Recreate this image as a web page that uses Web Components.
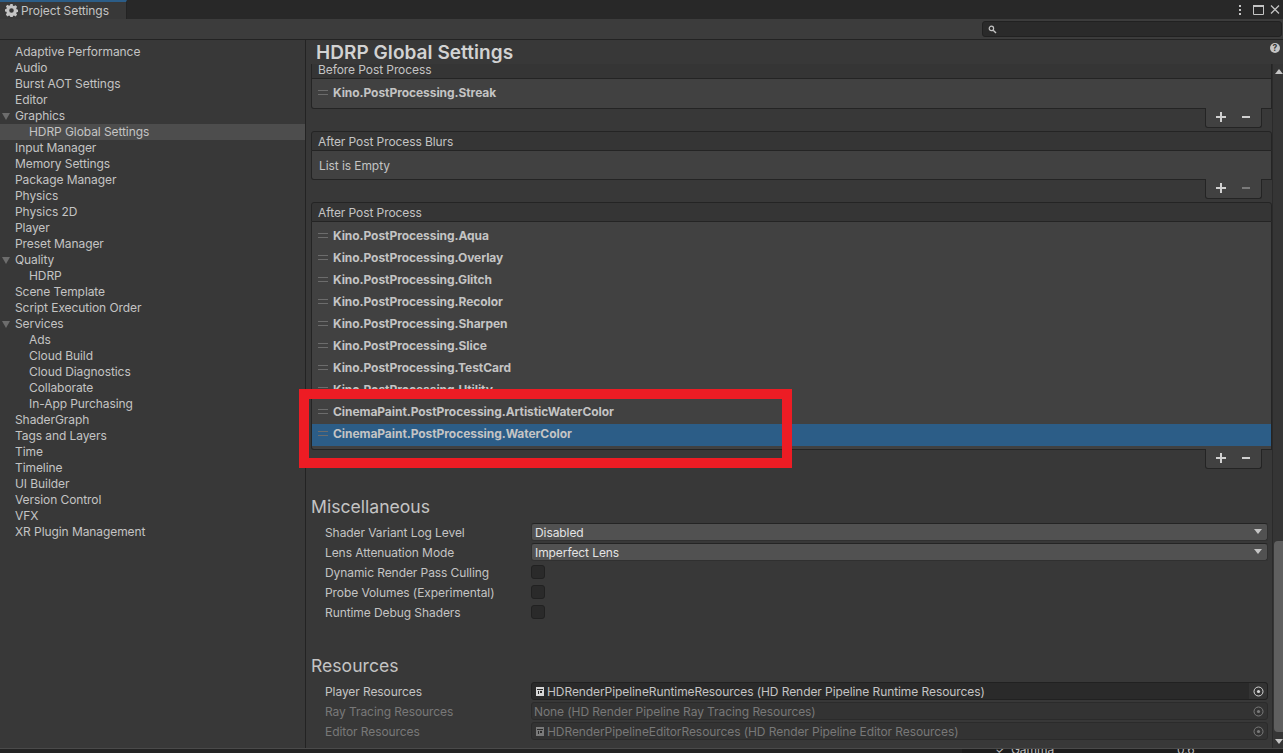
<!DOCTYPE html>
<html>
<head>
<meta charset="utf-8">
<title>Project Settings</title>
<style>
  html, body { margin: 0; height: 100%; overflow: hidden; background: #383838; }
  body { font: 12px Inter, "Liberation Sans", sans-serif; letter-spacing: -0.08px; color: #c4c4c4; }
</style>
</head>
<body>
<settings-window>
  <settings-sidebar slot="side">
    <tree-row>Adaptive Performance</tree-row>
    <tree-row>Audio</tree-row>
    <tree-row>Burst AOT Settings</tree-row>
    <tree-row>Editor</tree-row>
    <tree-row open>Graphics</tree-row>
    <tree-row child selected>HDRP Global Settings</tree-row>
    <tree-row>Input Manager</tree-row>
    <tree-row>Memory Settings</tree-row>
    <tree-row>Package Manager</tree-row>
    <tree-row>Physics</tree-row>
    <tree-row>Physics 2D</tree-row>
    <tree-row>Player</tree-row>
    <tree-row>Preset Manager</tree-row>
    <tree-row open>Quality</tree-row>
    <tree-row child>HDRP</tree-row>
    <tree-row>Scene Template</tree-row>
    <tree-row>Script Execution Order</tree-row>
    <tree-row open>Services</tree-row>
    <tree-row child>Ads</tree-row>
    <tree-row child>Cloud Build</tree-row>
    <tree-row child>Cloud Diagnostics</tree-row>
    <tree-row child>Collaborate</tree-row>
    <tree-row child>In-App Purchasing</tree-row>
    <tree-row>ShaderGraph</tree-row>
    <tree-row>Tags and Layers</tree-row>
    <tree-row>Time</tree-row>
    <tree-row>Timeline</tree-row>
    <tree-row>UI Builder</tree-row>
    <tree-row>Version Control</tree-row>
    <tree-row>VFX</tree-row>
    <tree-row>XR Plugin Management</tree-row>
  </settings-sidebar>

  <reorder-list title="Before Post Process" style="--head-h:15px;--body-h:30px;--pad:3px">
    <list-item>Kino.PostProcessing.Streak</list-item>
  </reorder-list>
  <reorder-list title="After Post Process Blurs" style="--top:3px;--body-h:29px" empty>
    <span class="empty">List is Empty</span>
  </reorder-list>
  <reorder-list title="After Post Process" style="--top:3px;--body-h:228px;--pad:4px;--item-pb:4px">
    <list-item>Kino.PostProcessing.Aqua</list-item>
    <list-item>Kino.PostProcessing.Overlay</list-item>
    <list-item>Kino.PostProcessing.Glitch</list-item>
    <list-item>Kino.PostProcessing.Recolor</list-item>
    <list-item>Kino.PostProcessing.Sharpen</list-item>
    <list-item>Kino.PostProcessing.Slice</list-item>
    <list-item>Kino.PostProcessing.TestCard</list-item>
    <list-item>Kino.PostProcessing.Utility</list-item>
    <list-item>CinemaPaint.PostProcessing.ArtisticWaterColor</list-item>
    <list-item selected>CinemaPaint.PostProcessing.WaterColor</list-item>
  </reorder-list>

  <section-head style="--gap:27px;--after:4px">Miscellaneous</section-head>
  <field-row label="Shader Variant Log Level"><popup-field>Disabled</popup-field></field-row>
  <field-row label="Lens Attenuation Mode"><popup-field>Imperfect Lens</popup-field></field-row>
  <field-row label="Dynamic Render Pass Culling"><check-box></check-box></field-row>
  <field-row label="Probe Volumes (Experimental)"><check-box></check-box></field-row>
  <field-row label="Runtime Debug Shaders"><check-box></check-box></field-row>

  <section-head style="--gap:33px;--after:4px">Resources</section-head>
  <field-row label="Player Resources"><object-field icon>HDRenderPipelineRuntimeResources (HD Render Pipeline Runtime Resources)</object-field></field-row>
  <field-row label="Ray Tracing Resources" disabled><object-field disabled>None (HD Render Pipeline Ray Tracing Resources)</object-field></field-row>
  <field-row label="Editor Resources" disabled><object-field icon disabled>HDRenderPipelineEditorResources (HD Render Pipeline Editor Resources)</object-field></field-row>
</settings-window>

<script>
  const define = (name, css, html, setup) => {
    customElements.define(name, class extends HTMLElement {
      constructor() {
        super();
        this.attachShadow({ mode: 'open' }).innerHTML = `<style>${css}</style>${html(this)}`;
      }
      connectedCallback() {
        if (setup) setup(this);
      }
    });
  };

  define('settings-window', `
    :host { display: flex; flex-direction: column; height: 753px; position: relative; overflow: hidden; }
    .tabs { height: 19px; background: #282828; display: flex; justify-content: space-between; flex: none; }
    .tab { width: 127px; box-sizing: border-box; background: #383838; border-top: 2px solid #2c5d87; border-right: 1px solid #232323;
      display: flex; align-items: center; gap: 3px; padding-left: 5px; color: #c4c4c4; height: 19px; }
    .win { display: flex; align-items: center; padding-right: 3px; }
    .win svg { display: block; }
    .tools { height: 20px; flex: none; background: #3c3c3c; border-bottom: 1px solid #232323; display: flex; justify-content: flex-end; align-items: center; padding-right: 1px; }
    .search { width: 300px; height: 16px; box-sizing: border-box; background: #2a2a2a; border: 1px solid #212121; border-radius: 3px; display: flex; align-items: center; padding-left: 5px; }
    .main { flex: none; height: 708px; display: flex; }
    .side { width: 305px; flex: none; border-right: 1px solid #232323; background: #383838; }
    .right { flex: 1; min-width: 0; display: flex; flex-direction: column; position: relative; }
    .title { height: 24px; flex: none; padding: 2px 0 0 10px; box-sizing: border-box; font-size: 19px; font-weight: 600; letter-spacing: 0.05px; color: #d2d2d2; line-height: 22px; position: relative; z-index: 1; background: #383838; }
    .help { position: absolute; right: 2px; top: 2px; }
    .view { flex: 1; min-height: 0; display: flex; }
    .scroll { flex: 1; min-width: 0; padding-left: 5px; overflow: hidden; }
    .bar { width: 11px; flex: none; box-sizing: border-box; background: #353535; border-left: 1px solid #2a2a2a; position: relative; }
    .thumb { position: absolute; left: 1px; right: 0; top: 477px; height: 191px; background: #5f5f5f; border-radius: 4px 0 0 4px; }
    .arrow { position: absolute; left: 2px; width: 0; height: 0; border-left: 4px solid transparent; border-right: 4px solid transparent; }
    .up { top: 5px; border-bottom: 5px solid #c4c4c4; }
    .down { bottom: 4px; border-top: 5px solid #c4c4c4; }
    .under { flex: 1; min-height: 0; background: #232323; border-top: 1px solid #4a4a4a; display: flex; line-height: 14px; overflow: hidden; }
    .gamma { margin-left: 962px; flex: 1; background: #1c1c1c; display: flex; box-sizing: border-box; color: #b8b8b8; margin-top: -6px; }
    .gamma i { font-style: normal; width: 49px; padding-left: 33px; box-sizing: border-box; flex: none; }
    .gamma b { font-weight: 400; width: 166px; flex: none; }
    .red { position: absolute; left: 299px; top: 389px; width: 493px; height: 79px; box-sizing: border-box; border: 10px solid #ed1c24; pointer-events: none; }
  `, () => `
    <div class="tabs">
      <div class="tab">
        <svg width="13" height="13" viewBox="0 0 16 16"><path fill="#c4c4c4" fill-rule="evenodd" d="M6.6 0h2.8l.4 2 1.3.6 1.8-1.1 2 2-1.1 1.8.5 1.3 2 .4v2.8l-2 .4-.5 1.3 1.1 1.8-2 2-1.8-1.1-1.3.5-.4 2H6.6l-.4-2-1.3-.5-1.8 1.1-2-2L2.2 10.9l-.5-1.3-2-.4V6.4l2-.4.5-1.3L1.1 2.9l2-2 1.8 1.1 1.3-.5zM8 5.2a2.8 2.8 0 1 0 0 5.6 2.8 2.8 0 0 0 0-5.6z"/></svg>
        <span>Project Settings</span>
      </div>
      <div class="win">
        <svg width="4" height="16" viewBox="0 0 4 16" style="margin-right:11px"><g fill="#c4c4c4"><rect x="1" y="3" width="2" height="2"/><rect x="1" y="7" width="2" height="2"/><rect x="1" y="11" width="2" height="2"/></g></svg>
        <svg width="11" height="16" viewBox="0 0 11 16" style="margin-right:6px"><path fill="none" stroke="#c4c4c4" d="M.5 3.5h10v9H.5z"/><path stroke="#c4c4c4" stroke-width="2" d="M0 4h11"/></svg>
        <svg width="10" height="16" viewBox="0 0 10 16"><path fill="none" stroke="#c4c4c4" stroke-width="1.3" d="M1 3.5l8 8m0-8l-8 8"/></svg>
      </div>
    </div>
    <div class="tools">
      <div class="search">
        <svg width="9" height="9" viewBox="0 0 9 9"><circle cx="3.4" cy="3.4" r="2.2" fill="none" stroke="#c4c4c4" stroke-width="1.2"/><path d="M5.2 5.2L8 8" stroke="#c4c4c4" stroke-width="1.4"/></svg>
      </div>
    </div>
    <div class="main">
      <div class="side"><slot name="side"></slot></div>
      <div class="right">
        <div class="title">HDRP Global Settings
          <svg class="help" width="12" height="12" viewBox="0 0 12 12"><circle cx="6" cy="6" r="5" fill="#c4c4c4"/><text x="6" y="9" text-anchor="middle" font-size="8.5" font-weight="700" font-family="Inter, sans-serif" fill="#383838">?</text></svg>
        </div>
        <div class="view">
          <div class="scroll"><slot></slot></div>
          <div class="bar"><i class="arrow up"></i><i class="thumb"></i><i class="arrow down"></i></div>
        </div>
      </div>
    </div>
    <div class="under"><div class="gamma"><i>✓</i><b>Gamma</b><span>0.6</span></div></div>
    <div class="red"></div>
  `);

  define('settings-sidebar', `
    :host { display: block; padding-top: 4px; }
  `, () => `<slot></slot>`);

  define('tree-row', `
    :host { display: block; height: 16px; line-height: 16px; padding-left: 15px; position: relative; color: #c4c4c4; white-space: nowrap; }
    :host([child]) { padding-left: 29px; }
    :host([selected]) { background: #4d4d4d; }
    :host([open])::before { content: ""; position: absolute; left: 2px; top: 5px; border-left: 4.5px solid transparent; border-right: 4.5px solid transparent; border-top: 7px solid #6d6d6d; }
  `, () => `<slot></slot>`);

  define('reorder-list', `
    :host { display: block; width: 961px; box-sizing: border-box; margin-top: var(--top, 0); }
    .head { height: var(--head-h, 20px); line-height: 20px; box-sizing: border-box; padding-left: 6px; background: #353535; border: 1px solid #242424; border-radius: 3px 3px 0 0; color: #c4c4c4; overflow: hidden; }
    :host([title="Before Post Process"]) .head { border-top: 0; border-radius: 0; line-height: 12px; }
    .body { height: var(--body-h); box-sizing: border-box; padding-top: var(--pad, 3px); background: #414141; border: 1px solid #242424; border-top: 0; border-radius: 0 0 0 3px; overflow: hidden; }
    .foot { margin: -1px 10px 0 auto; width: 57px; height: 20px; box-sizing: border-box; background: #414141; border: 1px solid #242424; border-top: 0; border-radius: 0 0 3px 3px; display: flex; gap: 16px; align-items: center; padding: 0 0 1px 10px; position: relative; }
    .foot svg { display: block; }
    ::slotted(.empty) { display: block; padding: 4px 0 0 7px; line-height: 16px; }
  `, host => `
    <div class="head">${host.getAttribute('title')}</div>
    <div class="body"><slot></slot></div>
    <div class="foot">
      <svg width="10" height="10" viewBox="0 0 10 10"><path d="M5 0v10M0 5h10" stroke="#d0d0d0" stroke-width="2"/></svg>
      <svg width="8" height="10" viewBox="0 0 8 10"><path d="M0 5h8" stroke="${host.hasAttribute('empty') ? '#7a7a7a' : '#d0d0d0'}" stroke-width="2"/></svg>
    </div>
  `);

  define('list-item', `
    :host { display: flex; align-items: center; height: 22px; box-sizing: border-box; padding: 0 0 var(--item-pb, 2px) 6px; gap: 5px; font-weight: 700; letter-spacing: -0.06px; color: #c4c4c4; white-space: nowrap; }
    :host([selected]) { background: #2c5d87; }
    i { width: 10px; height: 3px; border-top: 1px solid #6c6c6c; border-bottom: 1px solid #6c6c6c; flex: none; }
  `, () => `<i></i><slot></slot>`);

  define('section-head', `
    :host { display: block; margin-top: var(--gap); margin-bottom: var(--after); font-size: 17.6px; line-height: 22px; letter-spacing: 0; color: #c4c4c4; }
  `, () => `<slot></slot>`);

  define('field-row', `
    :host { display: flex; height: 20px; align-items: center; padding-left: 14px; }
    :host([disabled]) .label { color: #787878; }
    .label { width: 206px; flex: none; color: #c4c4c4; white-space: nowrap; }
    .val { flex: 1; min-width: 0; margin-right: 4px; }
  `, host => `<div class="label">${host.getAttribute('label')}</div><div class="val"><slot></slot></div>`);

  define('popup-field', `
    :host { display: flex; align-items: center; height: 18px; box-sizing: border-box; background: #515151; border: 1px solid #303030; border-top-color: #242424; border-radius: 3px; padding-left: 3px; color: #e4e4e4; position: relative; }
    :host::after { content: ""; position: absolute; right: 5px; top: 5px; border-left: 4px solid transparent; border-right: 4px solid transparent; border-top: 5px solid #c4c4c4; }
  `, () => `<slot></slot>`);

  define('check-box', `
    :host { display: block; width: 14px; height: 14px; box-sizing: border-box; background: #2a2a2a; border: 1px solid #212121; border-radius: 3px; }
  `, () => ``);

  define('object-field', `
    :host { display: flex; align-items: center; height: 18px; box-sizing: border-box; background: #2a2a2a; border: 1px solid #212121; border-radius: 3px; padding-left: 2px; color: #c4c4c4; white-space: nowrap; position: relative; gap: 3px; }
    :host([icon]) { padding-left: 4px; }
    :host([disabled]) { background: #333; border-color: #2b2b2b; color: #787878; }
    svg.doc { flex: none; }
    .pick { position: absolute; right: 0; top: 0; bottom: 0; width: 18px; background: #333; border-radius: 0 3px 3px 0; display: flex; align-items: center; justify-content: center; }
    :host([disabled]) .pick { background: none; }
  `, host => {
    const c = host.hasAttribute('disabled') ? '#7a7a7a' : '#d6d6d6';
    return `${host.hasAttribute('icon') ? `<svg class="doc" width="8" height="9" viewBox="0 0 8 9"><path fill="${c}" d="M0 0h8v9H0z"/><path fill="#2a2a2a" d="M1 2h6v1H1zM2 4h1v3H2zM4 4h2v2H4z"/></svg>` : ''}<slot></slot>
    <div class="pick"><svg width="11" height="11" viewBox="0 0 11 11"><circle cx="5.5" cy="5.5" r="4.5" fill="none" stroke="${c}"/><circle cx="5.5" cy="5.5" r="1.6" fill="${c}"/></svg></div>`;
  });
</script>
</body>
</html>
